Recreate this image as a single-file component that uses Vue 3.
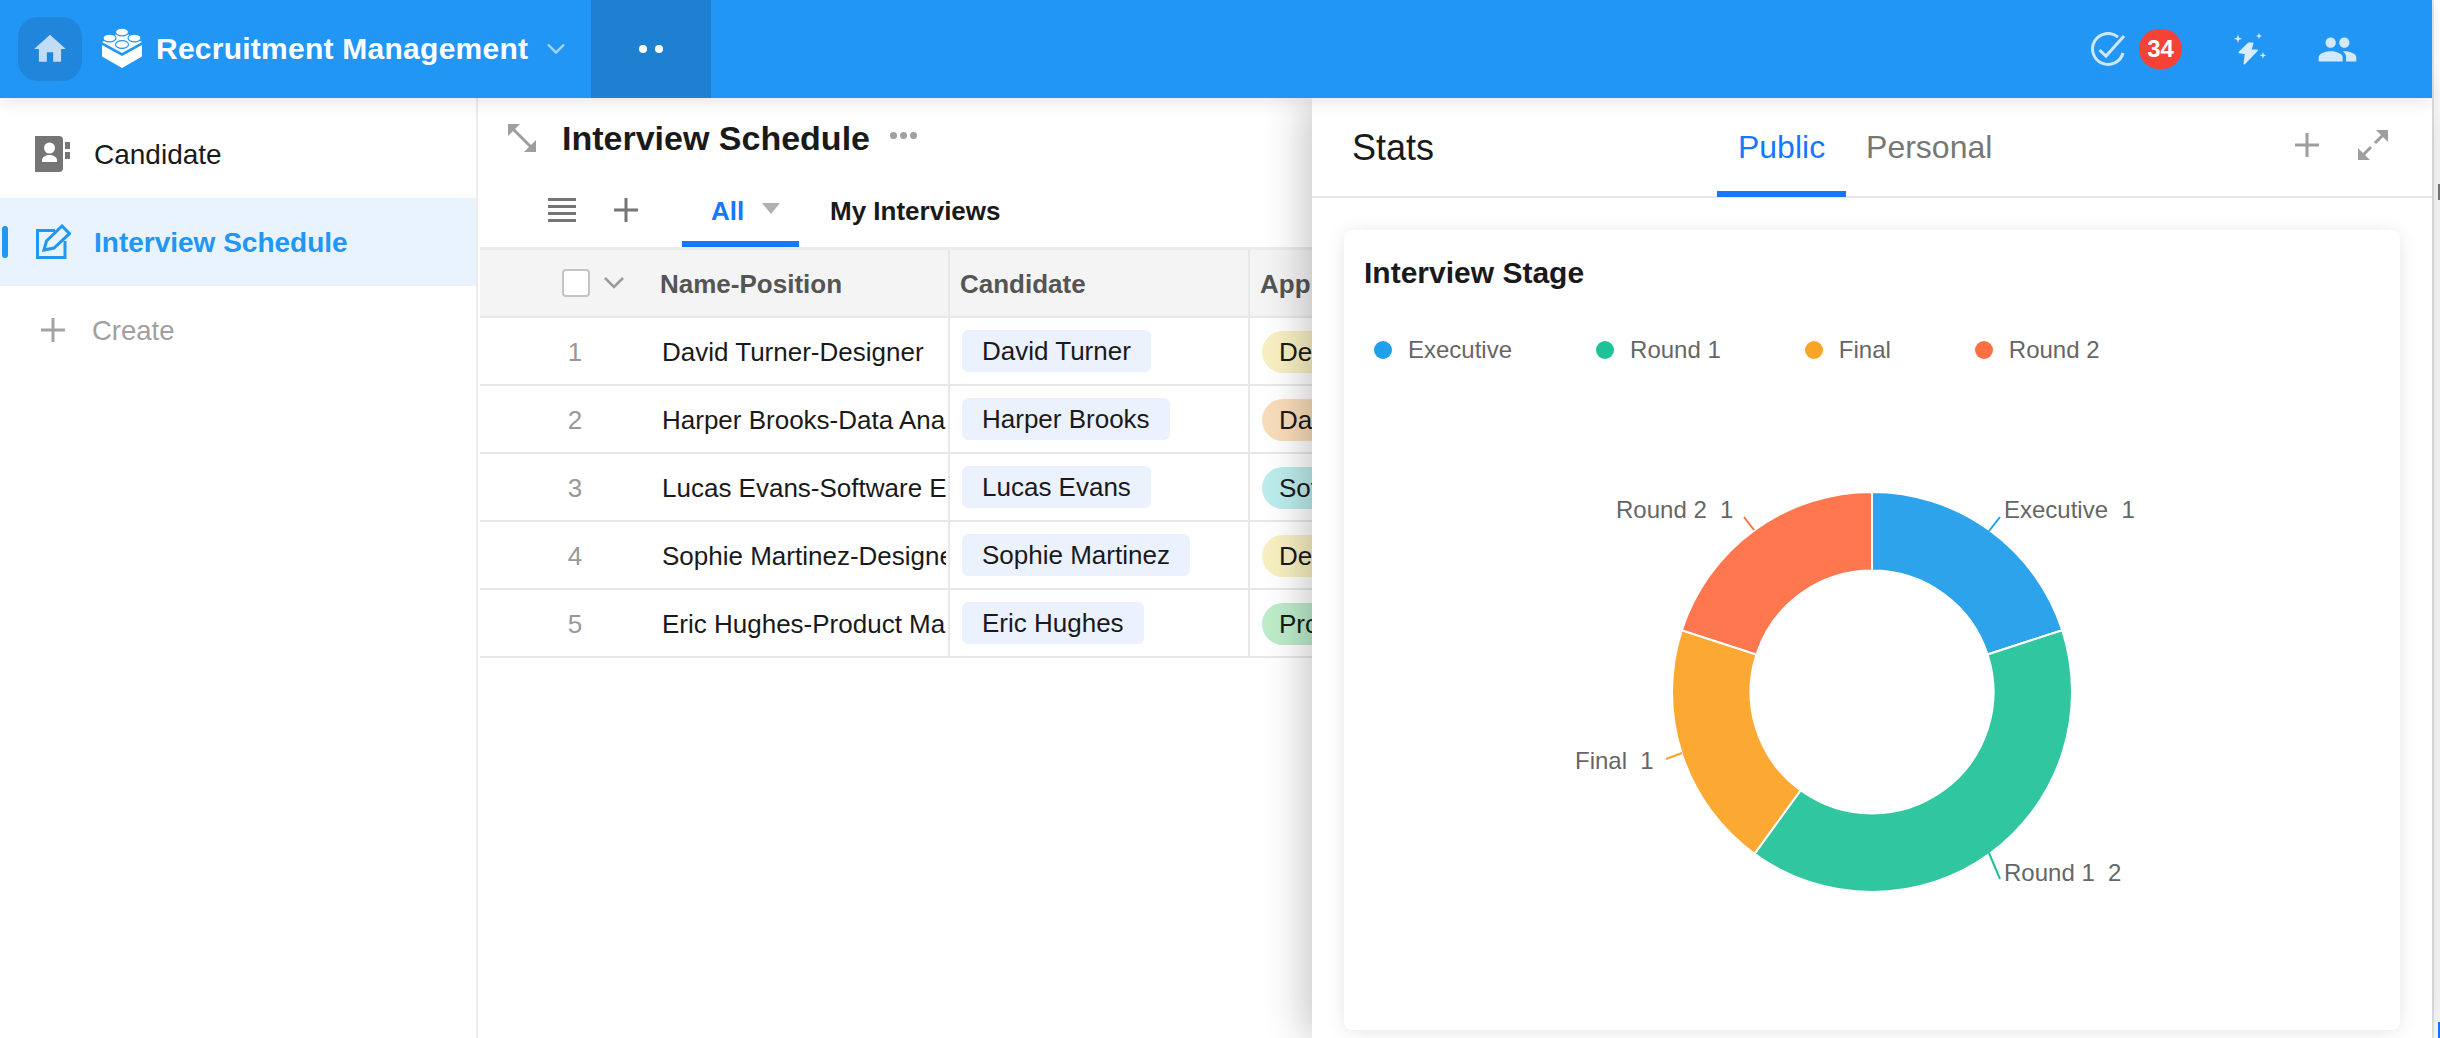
<template>
  <div class="app">
    <div class="shell">
      <header class="topbar">
        <div class="home-btn">
          <svg width="38" height="38" viewBox="0 0 24 24"><path fill="#c2dcf5" d="M10 20v-6h4v6h5v-8h3L12 3 2 12h3v8z" /></svg>
        </div>
        <svg class="logo" width="40" height="40" viewBox="0 0 40 40">
          <path fill="#fff" d="M0 17l20 11 20-11v11.500L20 40 0 28.500z" />
          <path fill="#fff" d="M20 3l20 11-20 11L0 14z" />
          <g fill="#fff" stroke="#2196f5" stroke-width="1.2">
            <ellipse cx="20" cy="4" rx="6.500" ry="3.800" />
            <ellipse cx="7.500" cy="10" rx="6.500" ry="3.800" />
            <ellipse cx="32.500" cy="10" rx="6.500" ry="3.800" />
            <ellipse cx="20" cy="16.500" rx="6.500" ry="3.800" />
          </g>
        </svg>
        <span class="app-name">Recruitment Management</span>
        <svg class="app-caret" width="18" height="12" viewBox="0 0 18 12"><path d="M1 1.500l8 8 8-8" fill="none" stroke="#a9d4f8" stroke-width="2.400" /></svg>
        <div class="more-cell"><i></i><i></i></div>

        <div class="top-actions">
          <svg width="35" height="35" viewBox="0 0 35 35" fill="none" stroke="#cfe6fb" stroke-width="3">
            <path d="M27 5.100A15.500 15.500 0 1 0 32 21" />
            <path d="M8.500 18l6.500 6L33 4" />
          </svg>
          <span class="badge">34</span>
          <svg class="spark" width="34" height="32" viewBox="15 15 102 96">
            <path fill="#d9ebfc" stroke="#d9ebfc" stroke-width="5" stroke-linejoin="round" d="M62 46L34 73l19 3-4 31 38-40-19-1 6-20z" />
            <path fill="#d9ebfc" d="M30 19l3 10 10 3-10 3-3 10-3-10-10-3 10-3zM93 14l2.500 7.500 7.500 2.500-7.500 2.500-2.500 7.500-2.500-7.500-7.500-2.500 7.500-2.500zM105 72l2.500 7.500 7.500 2.500-7.500 2.500-2.500 7.500-2.500-7.500-7.500-2.500 7.500-2.500z" />
          </svg>
          <svg class="people" width="41" height="41" viewBox="0 0 24 24"><path fill="#d3e8fc" d="M16 11c1.660 0 2.990-1.340 2.990-3S17.660 5 16 5s-3 1.340-3 3 1.340 3 3 3zm-8 0c1.660 0 2.990-1.340 2.990-3S9.660 5 8 5 5 6.340 5 8s1.340 3 3 3zm0 2c-2.330 0-7 1.170-7 3.500V19h14v-2.500c0-2.330-4.670-3.500-7-3.500zm8 0c-.29 0-.62.02-.97.05 1.160.84 1.970 1.970 1.970 3.450V19h6v-2.500c0-2.330-4.670-3.500-7-3.500z" /></svg>
        </div>
      </header>

      <div class="body">
        <aside class="sidebar">
          <div class="side-item">
            <svg width="36" height="36" viewBox="0 0 36 36">
              <path fill="#757575" d="M0 0h24a4 4 0 0 1 4 4v28a4 4 0 0 1-4 4H0z" />
              <path fill="#757575" d="M30 6h5v7h-5zM30 16h5v7h-5z" />
              <circle cx="14.500" cy="12" r="5.500" fill="#fff" />
              <path fill="#fff" d="M7 26v-2c0-3 4-5 7.500-5s7.500 2 7.500 5v2z" />
            </svg>
            <span>Candidate</span>
          </div>
          <div class="side-item active">
            <svg width="36" height="36" viewBox="0 0 36 36" fill="none" stroke="#2196f3" stroke-width="3">
              <path d="M20 6.500H2.500v27H30V17" />
              <path d="M9 26l2.500-9L27 2l7.500 7.500L19 24z" />
            </svg>
            <span>Interview Schedule</span>
          </div>
          <div class="side-item create">
            <svg width="36" height="36" viewBox="0 0 36 36"><path d="M18 6v24M6 18h24" stroke="#a3a3a3" stroke-width="3" /></svg>
            <span>Create</span>
          </div>
        </aside>

        <main class="main">
          <div class="title-row">
            <svg width="28" height="28" viewBox="0 0 28 28">
              <path d="M4 4l20 20" stroke="#9e9e9e" stroke-width="3" />
              <path fill="#9e9e9e" d="M0 0h12L0 12zM28 28H16l12-12z" />
            </svg>
            <h1>Interview Schedule</h1>
            <span class="title-dots"><i></i><i></i><i></i></span>
          </div>

          <div class="view-row">
            <svg width="28" height="24" viewBox="0 0 28 24">
              <path d="M0 1.500h28M0 8.500h28M0 15.500h28M0 22.500h28" stroke="#757575" stroke-width="3" />
            </svg>
            <svg class="view-add" width="24" height="24" viewBox="0 0 24 24"><path d="M12 0v24M0 12h24" stroke="#757575" stroke-width="3" /></svg>
            <div class="view-tab on">All<i class="tri"></i></div>
            <div class="view-tab">My Interviews</div>
          </div>

          <div class="grid-row head">
            <div class="cell c-first">
              <span class="checkbox"></span>
              <svg width="20" height="12" viewBox="0 0 20 12"><path d="M1 1l9 9 9-9" fill="none" stroke="#9a9a9a" stroke-width="2.500" /></svg>
              <span class="head-name">Name-Position</span>
            </div>
            <div class="cell c-person">Candidate</div>
            <div class="cell c-job">Applied Position</div>
          </div>
          <div v-for="(r, i) in rows" :key="r.name" class="grid-row">
            <div class="cell c-num">{{ i + 1 }}</div>
            <div class="cell c-name"><span>{{ r.name }}-{{ r.job }}</span></div>
            <div class="cell c-person"><span class="chip">{{ r.name }}</span></div>
            <div class="cell c-job"><span class="pill" :style="{ background: r.color }">{{ r.job }}</span></div>
          </div>
        </main>

        <section class="panel">
          <div class="panel-head">
            <span class="panel-title">Stats</span>
            <div class="panel-tabs">
              <span class="panel-tab on">Public</span>
              <span class="panel-tab">Personal</span>
            </div>
            <div class="panel-actions">
              <svg width="26" height="26" viewBox="0 0 26 26"><path d="M13 1v24M1 13h24" stroke="#9e9e9e" stroke-width="3" /></svg>
              <svg width="30" height="30" viewBox="0 0 30 30">
                <path d="M17 13L26 4M13 17l-9 9" stroke="#9e9e9e" stroke-width="3" />
                <path fill="#9e9e9e" d="M30 0v12L18 0zM0 30V18l12 12z" />
              </svg>
            </div>
          </div>

          <div class="panel-body">
            <div class="card">
              <h3>Interview Stage</h3>
              <div class="legend">
                <span v-for="s in slices" :key="s.name" class="legend-item">
                  <i :style="{ background: s.dot }"></i>{{ s.name }}
                </span>
              </div>
              <svg class="donut" width="1056" height="630" viewBox="0 0 1056 630">
                <path v-for="s in slices" :key="s.name" :d="s.path" :fill="s.color" stroke="#fff" stroke-width="2" />
                <g v-for="s in slices" :key="s.name + '-label'">
                  <path :d="s.leader" fill="none" :stroke="s.dot" stroke-width="2" />
                  <text :x="s.lx" :y="s.ly" class="donut-label">{{ s.label }}</text>
                </g>
              </svg>
            </div>
          </div>
        </section>
      </div>
    </div>
    <div class="gutter"><i class="grip"></i><i class="grip blue"></i></div>
  </div>
</template>

<script setup>
const rows = [
  { name: 'David Turner', job: 'Designer', color: '#f8f0c2' },
  { name: 'Harper Brooks', job: 'Data Analyst', color: '#f9dcb9' },
  { name: 'Lucas Evans', job: 'Software Engineer', color: '#bdecec' },
  { name: 'Sophie Martinez', job: 'Designer', color: '#f8f0c2' },
  { name: 'Eric Hughes', job: 'Product Manager', color: '#bdeccb' },
]

const cx = 528
const cy = 292
const outer = 200
const inner = 121.5

function polar(r, deg) {
  const a = (deg * Math.PI) / 180
  return [cx + r * Math.sin(a), cy - r * Math.cos(a)]
}

function arc(from, to) {
  const big = to - from > 180 ? 1 : 0
  const [ax, ay] = polar(outer, from)
  const [bx, by] = polar(outer, to)
  const [c, d] = polar(inner, to)
  const [e, f] = polar(inner, from)
  return `M${ax} ${ay}A${outer} ${outer} 0 ${big} 1 ${bx} ${by}L${c} ${d}A${inner} ${inner} 0 ${big} 0 ${e} ${f}Z`
}

// label x/y are relative to the svg, which starts at 1344,400 on the page
const data = [
  { name: 'Executive', value: 1, color: '#2ca3ea', dot: '#1fa0e8', lx: 660, ly: 109, leader: 'M645 131L656 117' },
  { name: 'Round 1', value: 2, color: '#30c7a0', dot: '#1fc198', lx: 660, ly: 472, leader: 'M645 453L656 479' },
  { name: 'Final', value: 1, color: '#fca933', dot: '#fca426', lx: 231, ly: 360, leader: 'M338 353L322 359' },
  { name: 'Round 2', value: 1, color: '#fe774f', dot: '#fe7043', lx: 272, ly: 109, leader: 'M410 130L400 117' },
]

let start = 0
const slices = data.map((d) => {
  const end = start + (d.value / 5) * 360
  const s = { ...d, path: arc(start, end), label: `${d.name}  ${d.value}` }
  start = end
  return s
})
</script>

<style scoped>
.app {
  display: flex;
  height: 1038px;
  background: #fff;
  font-family: 'Liberation Sans', Arial, sans-serif;
  color: #1a1a1a;
  overflow: hidden;
}

.shell {
  width: 2432px;
  flex: none;
  display: flex;
  flex-direction: column;
  box-sizing: content-box;
  border-right: 2px solid #e8e8e8;
}

.gutter {
  flex: 1;
  display: flex;
  flex-direction: column;
  align-items: flex-end;
  padding-top: 184px;
}

.grip {
  width: 2px;
  height: 16px;
  background: #7a7a7a;
}

.grip.blue {
  margin-top: auto;
  background: #1677ff;
}

.topbar {
  height: 98px;
  flex: none;
  display: flex;
  align-items: center;
  background: #2196f5;
  color: #fff;
  position: relative;
  z-index: 3;
  box-shadow: 0 4px 16px rgba(0, 0, 0, 0.1);
}

.home-btn {
  width: 64px;
  height: 64px;
  margin-left: 18px;
  border-radius: 20px;
  background: #1f86dc;
  display: flex;
  align-items: center;
  justify-content: center;
}

.logo {
  margin: -2px 0 0 20px;
}

.app-name {
  margin-left: 14px;
  font-size: 30px;
  font-weight: 700;
  letter-spacing: 0.25px;
}

.app-caret {
  margin-left: 19px;
}

.more-cell {
  width: 120px;
  height: 98px;
  margin-left: 26px;
  background: #1f7fd0;
  display: flex;
  align-items: center;
  justify-content: center;
  gap: 8px;
}

.more-cell i {
  width: 8px;
  height: 8px;
  border-radius: 50%;
  background: #fff;
}

.top-actions {
  margin-left: auto;
  display: flex;
  align-items: center;
  padding-right: 74px;
}

.badge {
  width: 43px;
  height: 40px;
  margin-left: 13px;
  border-radius: 20px;
  background: #f44336;
  font-size: 24px;
  font-weight: 700;
  display: flex;
  align-items: center;
  justify-content: center;
}

.spark {
  margin-left: 51px;
}

.people {
  margin-left: 50px;
}

.body {
  flex: 1;
  display: flex;
  position: relative;
  min-height: 0;
}

.sidebar {
  width: 478px;
  flex: none;
  box-sizing: border-box;
  border-right: 2px solid #ececec;
  padding-top: 12px;
  font-size: 28px;
}

.side-item {
  height: 88px;
  display: flex;
  align-items: center;
  gap: 23px;
  padding-left: 35px;
  position: relative;
}

.side-item span {
  padding-top: 2px;
}

.side-item.active {
  background: #e8f3fd;
  color: #2196f3;
  font-weight: 700;
}

.side-item.active::before {
  content: '';
  position: absolute;
  left: 2px;
  top: 28px;
  width: 6px;
  height: 32px;
  border-radius: 3px;
  background: #2196f3;
}

.side-item.create {
  color: #a0a0a0;
  font-size: 27.5px;
  gap: 21px;
}

.main {
  flex: 1;
  min-width: 0;
  margin-left: 2px;
  overflow: hidden;
}

.title-row {
  height: 80px;
  display: flex;
  align-items: center;
  padding-left: 28px;
}

.title-row h1 {
  margin: 0 0 0 26px;
  font-size: 34px;
  font-weight: 700;
  color: #1a1a1a;
}

.title-dots {
  display: flex;
  gap: 3px;
  margin: -6px 0 0 20px;
}

.title-dots i {
  width: 7px;
  height: 7px;
  border-radius: 50%;
  background: #a0a0a0;
}

.view-row {
  height: 69px;
  display: flex;
  align-items: stretch;
  padding-left: 68px;
  border-bottom: 3px solid #ececec;
}

.view-row > svg {
  align-self: center;
  margin-bottom: 6px;
}

.view-add {
  margin-left: 38px;
}

.view-tab {
  display: flex;
  align-items: center;
  font-size: 26px;
  font-weight: 700;
  padding-top: 3px;
  margin-left: 31px;
  box-sizing: border-box;
  height: 69px;
  border-bottom: 6px solid transparent;
}

.view-tab.on {
  margin-left: 44px;
  width: 117px;
  padding-left: 29px;
  color: #1677ff;
  border-bottom-color: #1677ff;
}

.tri {
  margin: -5px 0 0 18px;
  border-left: 9px solid transparent;
  border-right: 9px solid transparent;
  border-top: 11px solid #b0b0b0;
}

.grid-row {
  display: flex;
  height: 68px;
  box-sizing: border-box;
  border-bottom: 2px solid #e8e8e8;
  font-size: 26px;
}

.grid-row.head {
  background: #f4f4f4;
  font-weight: 700;
  color: #555;
}

.cell {
  display: flex;
  align-items: center;
  flex: none;
  box-sizing: border-box;
  white-space: nowrap;
  overflow: hidden;
}

.c-first {
  width: 470px;
  padding-left: 82px;
  border-right: 2px solid #e8e8e8;
}

.checkbox {
  width: 28px;
  height: 28px;
  box-sizing: border-box;
  border: 2px solid #c4c4c4;
  border-radius: 4px;
  background: #fff;
  margin-right: 14px;
}

.head-name {
  margin-left: 36px;
  padding-top: 2px;
}

.c-num {
  width: 182px;
  padding: 2px 0 0 8px;
  justify-content: center;
  color: #999;
}

.c-name {
  width: 288px;
  padding-top: 2px;
  border-right: 2px solid #e8e8e8;
}

.c-name span {
  display: block;
  width: 284px;
  overflow: hidden;
}

.c-person {
  width: 300px;
  padding-left: 12px;
  border-right: 2px solid #e8e8e8;
}

.head .c-person {
  padding: 2px 0 0 10px;
}

.c-job {
  width: 400px;
  padding-left: 12px;
}

.head .c-job {
  padding: 2px 0 0 10px;
}

.chip {
  height: 42px;
  line-height: 42px;
  padding: 0 20px;
  border-radius: 6px;
  background: #ebf1fd;
}

.pill {
  height: 42px;
  line-height: 42px;
  margin-top: 2px;
  padding: 0 17px;
  border-radius: 21px;
}

.panel {
  position: absolute;
  top: 0;
  right: 0;
  bottom: 0;
  width: 1120px;
  z-index: 2;
  background: #fff;
  box-shadow: -6px 0 40px rgba(0, 0, 0, 0.24);
  display: flex;
  flex-direction: column;
}

.panel-head {
  height: 100px;
  flex: none;
  box-sizing: border-box;
  border-bottom: 2px solid #e8e8e8;
  display: flex;
  align-items: stretch;
  padding: 0 44px 0 40px;
}

.panel-title {
  align-self: center;
  font-size: 36px;
  margin-top: 2px;
}

.panel-tabs {
  display: flex;
  margin-left: 283px;
  font-size: 32px;
  color: #777;
}

.panel-tab {
  display: flex;
  align-items: center;
  padding: 5px 20px 0;
  box-sizing: border-box;
  border-bottom: 6px solid transparent;
  height: 99px;
}

.panel-tab.on {
  width: 129px;
  justify-content: center;
  padding: 5px 0 0;
  color: #1677ff;
  border-bottom-color: #1677ff;
}

.panel-actions {
  margin-left: auto;
  display: flex;
  align-items: center;
  gap: 38px;
  margin-top: -4px;
}

.panel-body {
  flex: 1;
  padding: 32px 32px 8px;
  min-height: 0;
  display: flex;
}

.card {
  flex: 1;
  border-radius: 8px;
  box-shadow: 0 2px 18px rgba(0, 0, 0, 0.1);
  display: flex;
  flex-direction: column;
}

.card h3 {
  margin: 0;
  padding: 26px 0 0 20px;
  font-size: 30px;
  line-height: 34px;
  font-weight: 700;
  color: #1a1a1a;
}

.legend {
  display: flex;
  gap: 84px;
  padding: 0 0 0 30px;
  margin-top: 46px;
  height: 64px;
  font-size: 24px;
  line-height: 28px;
  color: #666;
}

.legend-item {
  display: flex;
  align-items: flex-start;
}

.legend-item i {
  width: 18px;
  height: 18px;
  border-radius: 50%;
  margin: 5px 16px 0 0;
}

.donut {
  display: block;
  flex: none;
}

.donut-label {
  font-size: 24px;
  fill: #666;
  white-space: pre;
  dominant-baseline: central;
}
</style>

<style>
html,
body {
  background: #fff;
  overflow: hidden;
}
</style>
